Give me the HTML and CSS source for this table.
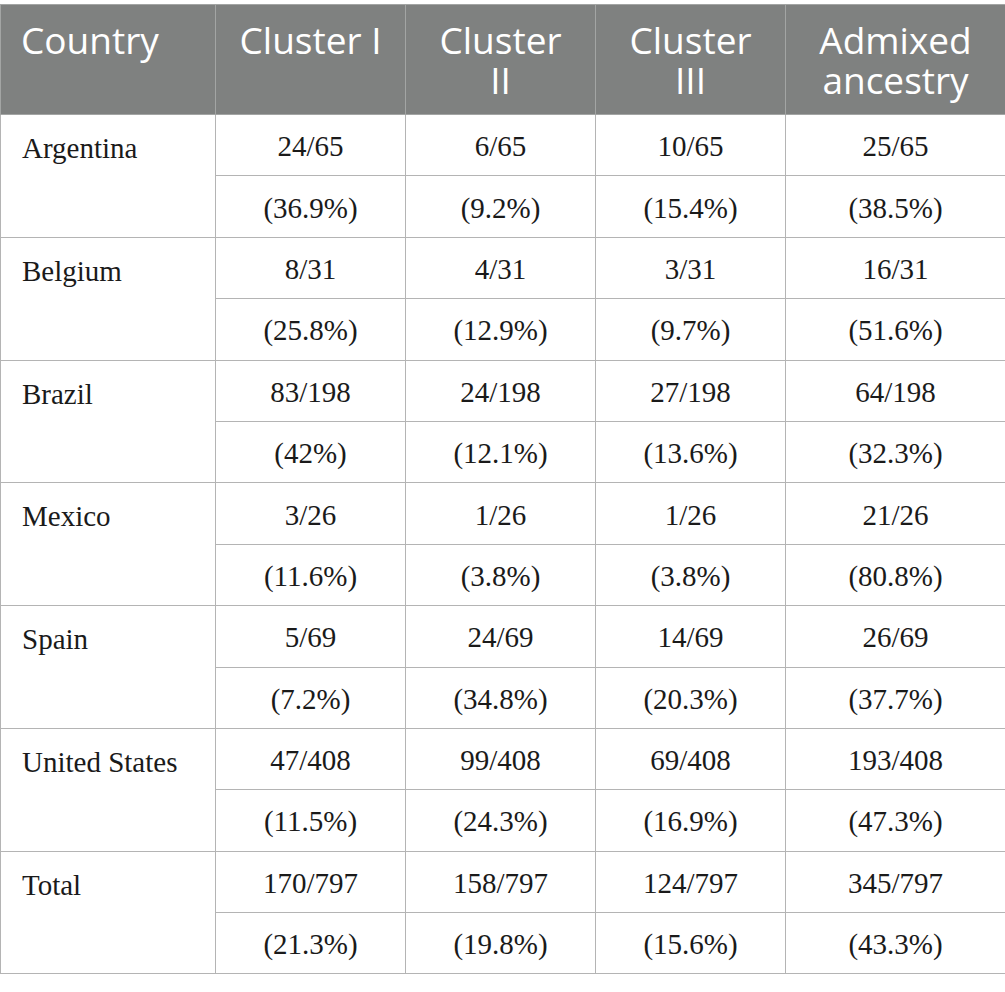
FILE: index.html
```html
<!DOCTYPE html>
<html lang="en">
<head>
    <meta charset="UTF-8">
    <meta name="viewport" content="width=device-width, initial-scale=1.0">
    <title>Ancestry clusters by country</title>
    <link rel="stylesheet" href="styles.css">
</head>
<body>
    <table class="ancestry-table">
        <colgroup>
            <col class="col-country">
            <col class="col-cluster">
            <col class="col-cluster">
            <col class="col-cluster">
            <col class="col-admixed">
        </colgroup>
        <thead>
            <tr>
                <th class="country-head">Country</th>
                <th>Cluster I</th>
                <th>Cluster<br>II</th>
                <th>Cluster<br>III</th>
                <th>Admixed<br>ancestry</th>
            </tr>
        </thead>
        <tbody>
            <tr>
                <td class="country" rowspan="2">Argentina</td>
                <td>24/65</td><td>6/65</td><td>10/65</td><td>25/65</td>
            </tr>
            <tr>
                <td>(36.9%)</td><td>(9.2%)</td><td>(15.4%)</td><td>(38.5%)</td>
            </tr>
            <tr>
                <td class="country" rowspan="2">Belgium</td>
                <td>8/31</td><td>4/31</td><td>3/31</td><td>16/31</td>
            </tr>
            <tr>
                <td>(25.8%)</td><td>(12.9%)</td><td>(9.7%)</td><td>(51.6%)</td>
            </tr>
            <tr>
                <td class="country" rowspan="2">Brazil</td>
                <td>83/198</td><td>24/198</td><td>27/198</td><td>64/198</td>
            </tr>
            <tr>
                <td>(42%)</td><td>(12.1%)</td><td>(13.6%)</td><td>(32.3%)</td>
            </tr>
            <tr>
                <td class="country" rowspan="2">Mexico</td>
                <td>3/26</td><td>1/26</td><td>1/26</td><td>21/26</td>
            </tr>
            <tr>
                <td>(11.6%)</td><td>(3.8%)</td><td>(3.8%)</td><td>(80.8%)</td>
            </tr>
            <tr>
                <td class="country" rowspan="2">Spain</td>
                <td>5/69</td><td>24/69</td><td>14/69</td><td>26/69</td>
            </tr>
            <tr>
                <td>(7.2%)</td><td>(34.8%)</td><td>(20.3%)</td><td>(37.7%)</td>
            </tr>
            <tr>
                <td class="country" rowspan="2">United States</td>
                <td>47/408</td><td>99/408</td><td>69/408</td><td>193/408</td>
            </tr>
            <tr>
                <td>(11.5%)</td><td>(24.3%)</td><td>(16.9%)</td><td>(47.3%)</td>
            </tr>
            <tr>
                <td class="country" rowspan="2">Total</td>
                <td>170/797</td><td>158/797</td><td>124/797</td><td>345/797</td>
            </tr>
            <tr>
                <td>(21.3%)</td><td>(19.8%)</td><td>(15.6%)</td><td>(43.3%)</td>
            </tr>
        </tbody>
    </table>
</body>
</html>
```

FILE: styles.css
```css
body {
    margin: 0;
    padding-top: 4px;
    background: #fff;
}

.ancestry-table {
    width: 1005px;
    border-collapse: collapse;
    table-layout: fixed;
    color: #1a1a1a;
}

.col-country {
    width: 215px;
}

.col-cluster {
    width: 190px;
}

.col-admixed {
    width: 220px;
}

.ancestry-table th {
    background: #7f8180;
    color: #fff;
    font-family: 'Open Sans', sans-serif;
    font-weight: 400;
    font-size: 37px;
    line-height: 40px;
    text-align: center;
    vertical-align: top;
    padding: 15px 12px 14px;
    height: 80px;
    border: 1px solid #a3a5a4;
    box-sizing: content-box;
    white-space: nowrap;
}

.ancestry-table th.country-head {
    text-align: left;
    padding-left: 20px;
}

.ancestry-table td {
    font-family: 'Liberation Serif', 'Times New Roman', serif;
    font-size: 29px;
    line-height: 32px;
    text-align: center;
    vertical-align: middle;
    height: 61.4px;
    padding: 2px 10px 0;
    border: 1px solid #b4b4b4;
    box-sizing: border-box;
}

.ancestry-table td.country {
    text-align: left;
    vertical-align: top;
    padding: 17px 21px 0;
}
```
